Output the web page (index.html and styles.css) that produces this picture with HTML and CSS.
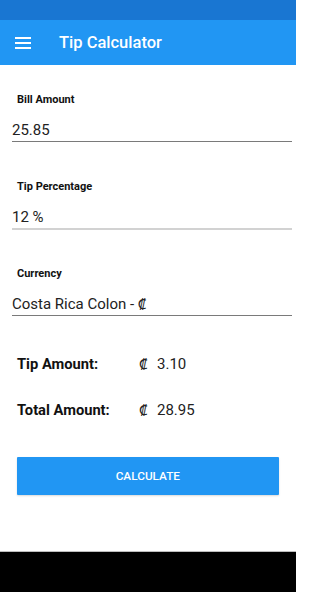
FILE: index.html
```html
<!DOCTYPE html>
<html lang="en">
<head>
<meta charset="utf-8">
<title>Tip Calculator</title>
<link rel="stylesheet" href="styles.css">
</head>
<body>
<div class="screen">
  <div class="status-bar"></div>
  <header class="app-bar">
    <svg class="menu-icon" width="16" height="12" viewBox="0 0 16 12" aria-hidden="true">
      <rect x="0" y="0" width="16" height="2" fill="#fff"/>
      <rect x="0" y="5" width="16" height="2" fill="#fff"/>
      <rect x="0" y="10" width="16" height="2" fill="#fff"/>
    </svg>
    <h1 class="title">Tip Calculator</h1>
  </header>
  <main class="content">
    <div class="field field-first">
      <div class="field-label">Bill Amount</div>
      <div class="field-value">25.85</div>
    </div>
    <div class="field field-light">
      <div class="field-label">Tip Percentage</div>
      <div class="field-value">12 %</div>
    </div>
    <div class="field field-last">
      <div class="field-label">Currency</div>
      <div class="field-value">Costa Rica Colon - ₡</div>
    </div>
    <div class="results">
      <div class="result-row">
        <span class="result-label">Tip Amount:</span>
        <span class="result-sym">₡</span>
        <span class="result-value">3.10</span>
      </div>
      <div class="result-row">
        <span class="result-label">Total Amount:</span>
        <span class="result-sym">₡</span>
        <span class="result-value">28.95</span>
      </div>
    </div>
    <button class="calc-btn" type="button">CALCULATE</button>
  </main>
  <div class="nav-bar"></div>
</div>
</body>
</html>
```

FILE: styles.css
```css
html, body {
  margin: 0;
  padding: 0;
  background: #ffffff;
}

body {
  font-family: Roboto, "Noto Sans", "Liberation Sans", sans-serif;
  color: #000;
}

.screen {
  width: 296px;
  height: 592px;
  display: flex;
  flex-direction: column;
  overflow: hidden;
}

.status-bar {
  height: 20px;
  background: #1976d2;
  flex: none;
}

.app-bar {
  height: 45px;
  background: #2196f3;
  flex: none;
  display: flex;
  align-items: center;
  padding-left: 15px;
  box-sizing: border-box;
}

.menu-icon {
  display: block;
  margin-top: 1px;
}

.title {
  margin: 0 0 0 28px;
  font-size: 16.5px;
  font-weight: 500;
  color: #fff;
  line-height: 20px;
  padding-top: 1px;
}

.content {
  flex: 1;
  display: flex;
  flex-direction: column;
  padding: 0 4px 0 12px;
}

.field {
  margin-top: 38px;
  padding-bottom: 2px;
  border-bottom: 1px solid #7a7a7a;
}

.field-first {
  margin-top: 27.6px;
}

.field-light {
  border-bottom: 2px solid #d2d2d2;
}

.field-last {
  margin-top: 37.6px;
}

.field-label {
  font-size: 11px;
  line-height: 13px;
  font-weight: 700;
  padding-left: 5px;
  color: #111;
}

.field-value {
  margin-top: 15px;
  font-size: 15px;
  line-height: 18px;
  color: #222;
}

.results {
  margin-top: 38.9px;
  padding-left: 5px;
  display: flex;
  flex-direction: column;
  gap: 27.7px;
}

.result-row {
  display: flex;
  align-items: baseline;
  font-size: 15px;
  line-height: 18px;
}

.result-label {
  width: 122px;
  font-size: 14.7px;
  font-weight: 700;
  color: #111;
}

.result-sym {
  width: 18px;
  color: #222;
}

.result-value {
  color: #222;
}

.calc-btn {
  margin: 38px 13px 0 4.7px;
  height: 38.6px;
  border: none;
  border-radius: 1px;
  background: #2196f3;
  color: #fff;
  font-family: Roboto, "Noto Sans", "Liberation Sans", sans-serif;
  font-size: 11.8px;
  font-weight: 500;
  padding: 0;
  box-shadow: 0 1px 2px rgba(0,0,0,0.15);
}

.nav-bar {
  height: 40px;
  flex: none;
  background: #000;
  border-top: 1px solid #bdbdbd;
}
```
